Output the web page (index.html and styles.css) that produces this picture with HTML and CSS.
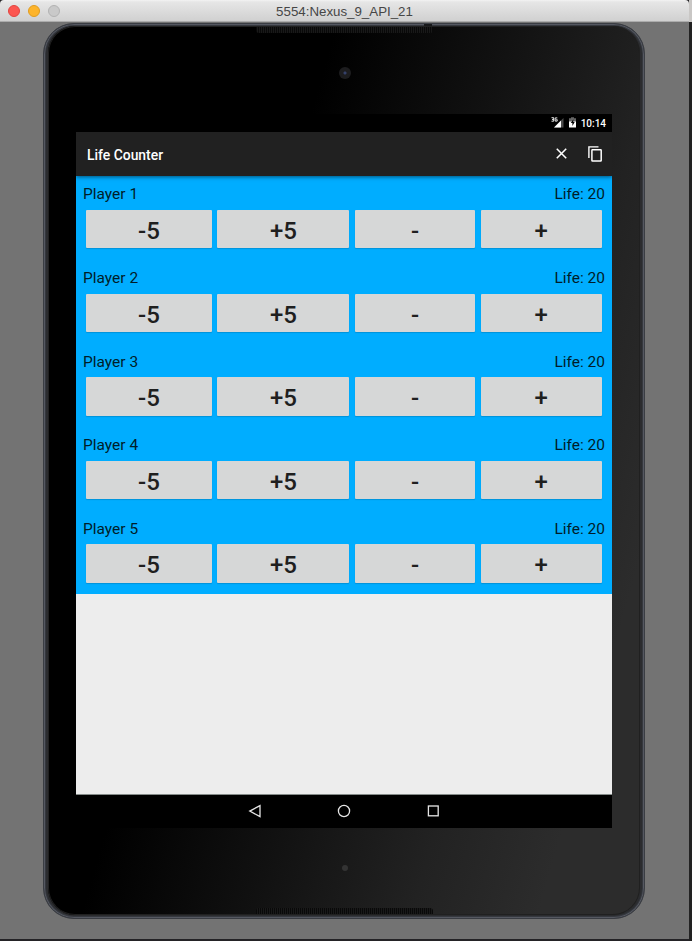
FILE: index.html
```html
<!DOCTYPE html>
<html lang="en">
<head>
<meta charset="utf-8">
<title>5554:Nexus_9_API_21</title>
<link rel="stylesheet" href="styles.css">
</head>
<body>
<div class="desktop">
  <div class="window">
    <header class="titlebar">
      <span class="light close"></span><span class="light minimize"></span><span class="light zoom"></span>
      <span class="title">5554:Nexus_9_API_21</span>
    </header>
    <div class="stage">
      <div class="device">
        <span class="mic"></span>
        <div class="glass">
          <div class="bezel-top"><span class="speaker"></span><span class="camera"></span></div>
          <div class="screen">
            <div class="status">
              <svg class="signal" width="13" height="11" viewBox="0 0 13 11"><path d="M12.5 1v9.5H3z" fill="#4d4d4d"/><path d="M10 3.5v7H3z" fill="#fff"/><path d="M.5.7h2.2v3.5H.5M1 2.4h1.7M6.3.9H4.2v3.2h2V2.6H5.3" fill="none" stroke="#fff" stroke-width=".9"/></svg>
              <svg class="battery" width="7" height="11" viewBox="0 0 7 11"><path d="M2 .3h3v1h2V5H0V1.3h2z" fill="#666"/><path d="M0 4.5h7v6H0z" fill="#fff"/><path d="M4.4 2.3 1.8 6h1.6v3l2.3-4H4.2z" fill="#000"/></svg>
              <span class="clock">10:14</span>
            </div>
            <div class="appbar">
              <h1>Life Counter</h1>
              <svg class="clear" width="11" height="11" viewBox="0 0 10 10"><path d="M.7.7l8.6 8.6M9.3.7.7 9.3" stroke="#fff" stroke-width="1.4"/></svg>
              <svg class="copy" width="15" height="16" viewBox="0 0 15 16"><path d="M.9 12V.9h9.6" fill="none" stroke="#fff" stroke-width="1.4"/><rect x="3.9" y="3.8" width="9.3" height="11.2" rx=".6" fill="none" stroke="#fff" stroke-width="1.5"/></svg>
            </div>
            <main class="players">
              <section class="player"><div class="info"><span>Player 1</span><span>Life: 20</span></div><div class="buttons"><button>-5</button><button>+5</button><button>-</button><button>+</button></div></section>
              <section class="player"><div class="info"><span>Player 2</span><span>Life: 20</span></div><div class="buttons"><button>-5</button><button>+5</button><button>-</button><button>+</button></div></section>
              <section class="player"><div class="info"><span>Player 3</span><span>Life: 20</span></div><div class="buttons"><button>-5</button><button>+5</button><button>-</button><button>+</button></div></section>
              <section class="player"><div class="info"><span>Player 4</span><span>Life: 20</span></div><div class="buttons"><button>-5</button><button>+5</button><button>-</button><button>+</button></div></section>
              <section class="player"><div class="info"><span>Player 5</span><span>Life: 20</span></div><div class="buttons"><button>-5</button><button>+5</button><button>-</button><button>+</button></div></section>
            </main>
            <nav class="navbar">
              <svg width="14" height="14" viewBox="0 0 14 14"><path d="M12 1.6v11L1.8 7.1z"/></svg>
              <svg width="14" height="14" viewBox="0 0 14 14"><circle cx="7" cy="7" r="5.6"/></svg>
              <svg width="14" height="14" viewBox="0 0 14 14"><rect x="2.4" y="2" width="9.8" height="9.8"/></svg>
            </nav>
          </div>
          <div class="bezel-bottom"><span class="sensor"></span><span class="speaker"></span></div>
        </div>
      </div>
    </div>
  </div>
  <aside class="behind"></aside>
</div>
</body>
</html>
```
FILE: styles.css
```css
* { box-sizing: border-box; }
body { margin: 0; background: #242424; font-family: Roboto, sans-serif; }
.desktop { display: flex; width: 692px; height: 941px; overflow: hidden; background: #242326; }
.window { width: 689px; height: 939px; display: flex; flex-direction: column; }
.behind { width: 3px; background: linear-gradient(#c9c7c5 0 22px, #222 22px 100%); }
.titlebar {
  position: relative; height: 22px; display: flex; align-items: center; gap: 8px; padding: 0 8px;
  background: linear-gradient(#f3f3f3, #e6e6e6 2px, #d0d0d0 21px, #acacac 21px);
  border-radius: 4px 4px 0 0;
}
.light { width: 12px; height: 12px; border-radius: 50%; border: 1px solid; }
.close { background: #fc5650; border-color: #e2443f; }
.minimize { background: #fdb42b; border-color: #e09c20; }
.zoom { background: #c9c9c9; border-color: #b2b2b2; }
.title {
  position: absolute; inset: 0; text-align: center; line-height: 23px;
  font-family: "Liberation Sans", sans-serif; font-size: 13.3px; color: #464646;
}
.stage { flex: 1; background: #737373; padding: 1px 0 0 43px; }
.device {
  position: relative; width: 602px; height: 896px; padding: 2px 4px 3px 4px; border-radius: 31px;
  background: #2b2c2f; border: 1px solid #3a3d43;
  box-shadow: inset 0 0 0 1px #555861, inset 0 0 0 2px #35383e;
}
.mic { position: absolute; left: 380px; top: 0; width: 8px; height: 2px; background: #17181a; }
.glass {
  height: 100%; border-radius: 27px; display: flex; flex-direction: column; align-items: center;
  background: linear-gradient(106deg, #000 34%, #111 54%, #222 73%, #2c2c2c 88%);
  box-shadow: inset 0 0 0 1px #202020;
}
.bezel-top { height: 88px; padding: 1px 0 0 1px; display: flex; flex-direction: column; align-items: center; }
.speaker { width: 177px; height: 6px; background: repeating-linear-gradient(90deg, #090909 0 1px, #191919 1px 2px); border-radius: 0 0 3px 3px; }
.camera { width: 12px; height: 12px; margin-top: 34px; border-radius: 50%; background: radial-gradient(#35416a 0 1px, #1d1d1f 2px); }
.screen { width: 536px; height: 714px; background: #ededed; display: flex; flex-direction: column; }
.status { height: 17.5px; flex: none; background: #000; display: flex; align-items: center; justify-content: flex-end; padding-right: 6px; color: #fff; }
.signal { margin-right: 5px; }
.battery { margin-right: 5px; }
.clock { font-size: 10px; font-weight: 500; line-height: 17px; padding-top: 1px; }
.appbar { height: 44.5px; flex: none; background: #212121; display: flex; align-items: center; padding: 0 9px 0 11px; box-shadow: 0 1px 4px #0008; position: relative; clip-path: inset(0 0 -8px); }
h1 { margin: 0; flex: 1; color: #fff; font-size: 13.9px; font-weight: 500; padding-top: 2px; }
.clear { margin-right: 21px; }
.players { flex: none; background: #00adff; }
.player { height: 83.65px; padding: 8.4px 7px 0; }
.info { height: 25.5px; display: flex; justify-content: space-between; font-size: 15.5px; line-height: 20px; color: #001d29; }
.buttons { display: grid; grid-template-columns: 126px 132px 120.6px 121px; gap: 5.4px; padding-left: 3px; }
button {
  height: 38.6px; border: 0; padding: 3px 0 0; border-radius: 1px; background: #d6d7d7; color: #1f1f1f;
  font: 500 24px/36px Roboto, sans-serif; box-shadow: 0 1px 1px #0055804d;
}
.navbar { margin-top: auto; height: 34px; border-top: 1px solid #858b89; background: #000; display: flex; align-items: center; justify-content: center; gap: 75px; }
.navbar svg { fill: none; stroke: #e6e6e6; stroke-width: 1.3; position: relative; top: -0.4px; }
.bezel-bottom { flex: 1; display: flex; flex-direction: column; align-items: center; justify-content: space-between; padding: 37px 0 1px 1px; }
.sensor { width: 6px; height: 6px; border-radius: 50%; background: #333; }
.bezel-bottom .speaker { border-radius: 3px 3px 0 0; }
```
